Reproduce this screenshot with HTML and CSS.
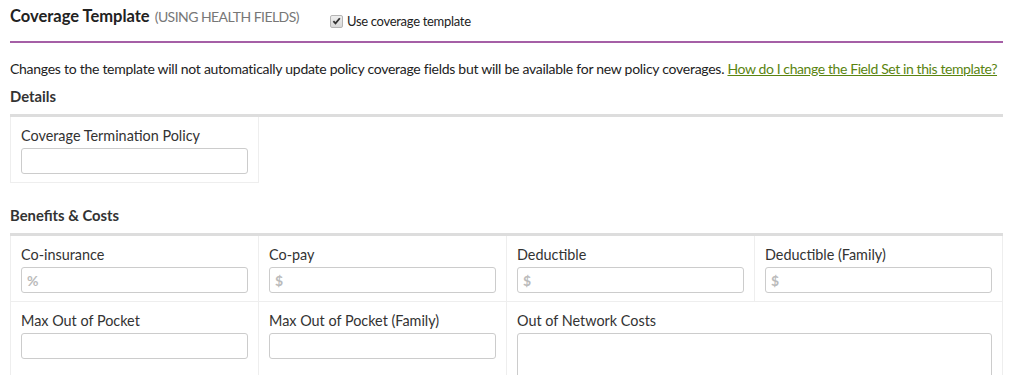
FILE: index.html
```html
<!DOCTYPE html>
<html lang="en">
<head>
<meta charset="utf-8">
<title>Coverage Template</title>
<link rel="stylesheet" href="styles.css">
</head>
<body>
<div class="page">
  <header class="head">
    <h1 class="title">Coverage Template <span class="sub">(USING HEALTH FIELDS)</span></h1>
    <label class="use">
      <span class="check"><svg viewBox="0 0 12 12" width="12" height="12"><path d="M2.6 6.2 L4.9 8.6 L9.6 3" fill="none" stroke="#333" stroke-width="2"/></svg></span>
      Use coverage template
    </label>
  </header>
  <p class="note">Changes to the template will not automatically update policy coverage fields but will be available for new policy coverages. <a href="#">How do I change the Field Set in this template?</a></p>

  <h2 class="section">Details</h2>
  <div class="grid">
    <div class="cell first">
      <div class="lbl">Coverage Termination Policy</div>
      <input class="field" type="text">
    </div>
  </div>

  <h2 class="section section-b">Benefits &amp; Costs</h2>
  <div class="grid">
    <div class="cell first">
      <div class="lbl">Co-insurance</div>
      <input class="field" type="text" placeholder="%">
    </div>
    <div class="cell">
      <div class="lbl">Co-pay</div>
      <input class="field" type="text" placeholder="$">
    </div>
    <div class="cell">
      <div class="lbl">Deductible</div>
      <input class="field" type="text" placeholder="$">
    </div>
    <div class="cell">
      <div class="lbl">Deductible (Family)</div>
      <input class="field" type="text" placeholder="$">
    </div>
    <div class="cell first">
      <div class="lbl">Max Out of Pocket</div>
      <input class="field" type="text">
    </div>
    <div class="cell">
      <div class="lbl">Max Out of Pocket (Family)</div>
      <input class="field" type="text">
    </div>
    <div class="cell wide">
      <div class="lbl">Out of Network Costs</div>
      <textarea class="field area"></textarea>
    </div>
  </div>
</div>
</body>
</html>
```

FILE: styles.css
```css
* { box-sizing: border-box; }
html, body { margin: 0; padding: 0; background: #fff; }
body {
  font-family: Lato, "Open Sans", sans-serif;
  font-size: 14px;
  color: #222;
}
.page { padding: 0 8px 0 10px; }

.head {
  display: flex;
  align-items: flex-start;
  height: 41px;
  border-bottom: 2px solid #a55fa6;
  box-sizing: content-box;
}
.title {
  margin: 4px 0 0;
  font-size: 16.5px;
  line-height: 24px;
  font-weight: 700;
  color: #222;
  white-space: nowrap;
}
.sub {
  font-weight: 400;
  font-size: 14px;
  color: #777;
  letter-spacing: -0.55px;
  margin-left: 1px;
}
.use {
  display: flex;
  align-items: center;
  margin: 12px 0 0 31px;
  font-size: 13px;
  line-height: 18px;
  letter-spacing: -0.3px;
  color: #222;
}
.check {
  display: inline-flex;
  width: 13px;
  height: 13px;
  margin-right: 4px;
  border: 1px solid #b5b5b5;
  border-radius: 2px;
  background: linear-gradient(#eee, #d8d8d8);
  align-items: center;
  justify-content: center;
}
.check svg { display: block; }

.note {
  margin: 16px 0 0;
  line-height: 20px;
  letter-spacing: -0.27px;
  white-space: nowrap;
}
.note a { color: #5a8410; text-decoration: underline; letter-spacing: -0.4px; }

.section {
  margin: 7px 0 8px;
  font-size: 14.8px;
  line-height: 20px;
  font-weight: 700;
  color: #333;
}
.section-b { margin-top: 22px; }

.grid {
  display: grid;
  grid-template-columns: 249px 248px 248px 248px;
  border-top: 3px solid #ddd;
}
.cell {
  padding: 10px 10px 8px;
  border-right: 1px solid #eee;
  border-bottom: 1px solid #eee;
}
.cell.first { border-left: 1px solid #eee; }
.cell.wide { grid-column: span 2; }
.lbl {
  font-size: 14.4px;
  line-height: 18px;
  color: #333;
  margin-bottom: 3px;
}
.field {
  display: block;
  width: 100%;
  height: 26px;
  margin: 0;
  padding: 0 5px;
  border: 1px solid #ccc;
  border-radius: 3px;
  font-family: inherit;
  font-size: 14px;
  color: #333;
  background: #fff;
}
.field::placeholder { color: #bbb; font-weight: 700; }
.area { height: 60px; resize: none; }
```
